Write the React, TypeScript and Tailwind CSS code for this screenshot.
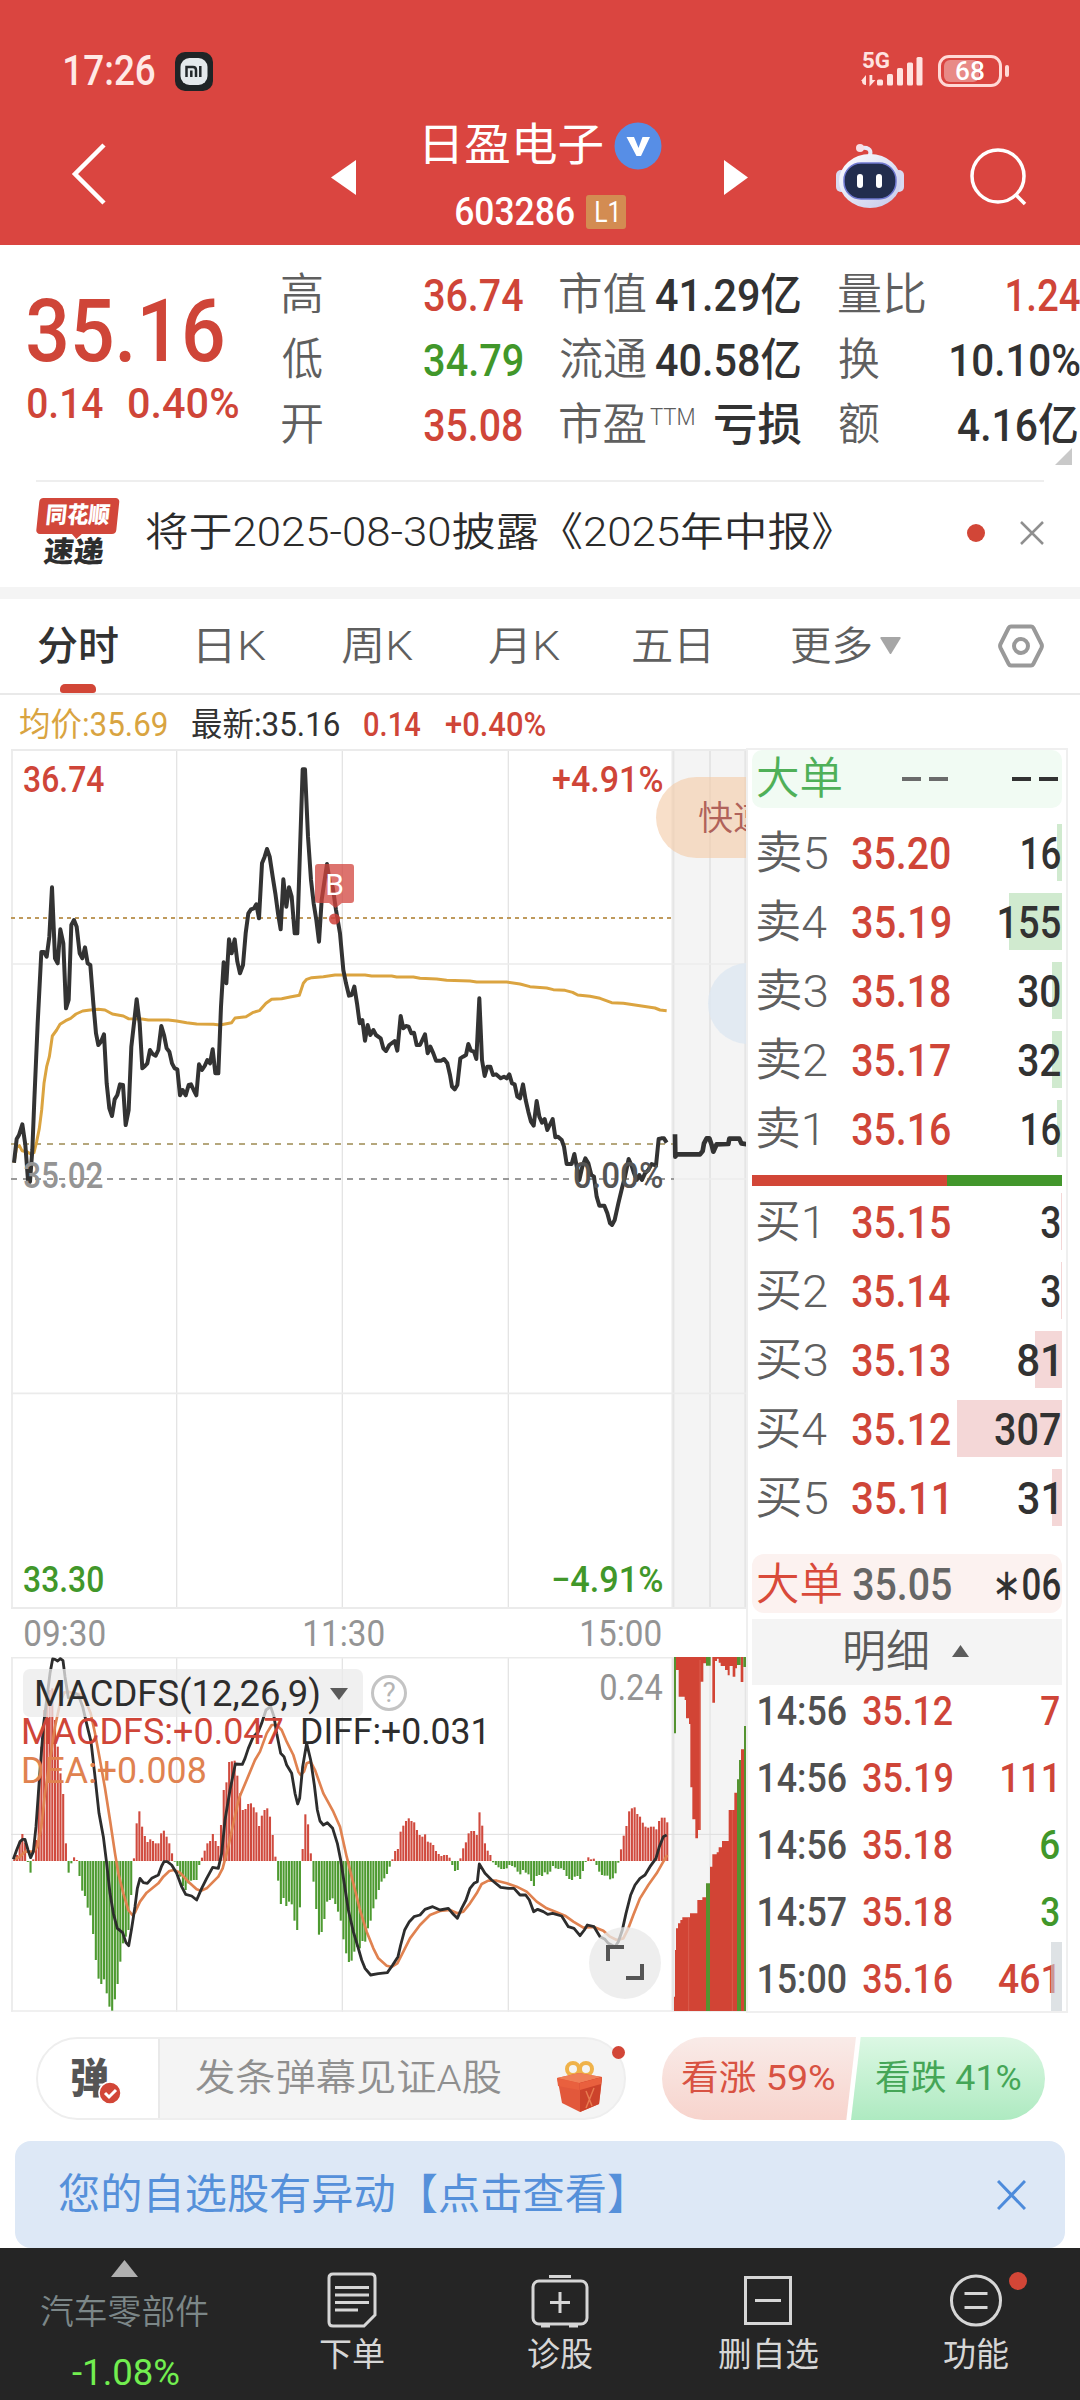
import React, { useLayoutEffect, useRef, useState } from "react";

const FONT = "font-['Roboto','Noto_Sans_CJK_SC',sans-serif]";

/** Single-line text whose visible ink spans exactly `w` pixels. */
function Fit({ w, children, className = "" }: { w: number; children: string; className?: string }) {
  const ref = useRef<HTMLSpanElement>(null);
  const [t, setT] = useState({ k: 1, dx: 0 });
  useLayoutEffect(() => {
    const el = ref.current;
    const ctx = document.createElement("canvas").getContext("2d");
    if (!el || !ctx) return;
    const cs = getComputedStyle(el);
    ctx.font = `${cs.fontWeight} ${cs.fontSize} ${cs.fontFamily}`;
    const m = ctx.measureText(children);
    const ink = m.actualBoundingBoxRight + m.actualBoundingBoxLeft;
    const k = ink > 0 ? w / ink : 1;
    setT({ k, dx: m.actualBoundingBoxLeft * k });
  }, [w, children]);
  return (
    <span className={`block shrink-0 whitespace-nowrap ${className}`} style={{ width: w }}>
      <span ref={ref} className="inline-block origin-left" style={{ transform: `translateX(${t.dx}px) scaleX(${t.k})` }}>
        {children}
      </span>
    </span>
  );
}

function Header() {
  return (
    <header className="h-[245px] bg-[#da4540] text-white">
      <div className="flex h-[123px] items-start pt-[46px]">
        <div className="flex h-[50px] w-full items-center pl-[65px]">
          <Fit w={90} className="text-[42px] font-medium leading-[50px] text-[#ffe9e6]">17:26</Fit>
          <svg className="ml-[20px]" width="38" height="39" viewBox="0 0 38 39">
            <rect width="38" height="39" rx="10" fill="#1f2426" />
            <rect x="5.500" y="6" width="27" height="27" rx="9" fill="#e4e9ec" />
            <path d="M11.500 25v-10h6.500q3 0 3 3v7M16.300 18.500v6.500M25.300 14v11" fill="none" stroke="#23282b" strokeWidth="2.500" />
          </svg>
          <div className="ml-auto mr-[13px] h-[36px] w-[64px]">
            <svg className="overflow-visible" width="64" height="36" viewBox="0 0 64 36" fill="#ffe3e0">
              <path d="M5 33.500V28H0l5-6zM1 28h4v4q-4 0-4-4zM8.500 22v11.500l6-6.500h-3.200V22z" />
              <rect x="16" y="26.500" width="6" height="6" rx="1.500" />
              <rect x="26" y="21" width="6" height="11.500" rx="1.500" />
              <rect x="36" y="15" width="6" height="17.500" rx="1.500" />
              <rect x="46" y="9.500" width="6" height="23" rx="1.500" />
              <rect x="55.500" y="4" width="6" height="28.500" rx="1.500" />
              <text x="1" y="15" fontSize="22" fontWeight="700" textLength="28" lengthAdjust="spacingAndGlyphs">5G</text>
            </svg>
          </div>
          <div className="relative mr-[7px] flex h-[32px] w-[64px] items-center justify-center rounded-[11px] border-[3px] border-[#ffd9d6]">
            <div className="absolute left-[3px] top-[2px] h-[22px] w-[35px] rounded-[6px] bg-[#e88a86]" />
            <Fit w={28} className="relative text-[26px] font-medium leading-[26px]">68</Fit>
          </div>
          <div className="-ml-[4px] mr-[71px] h-[12px] w-[4px] rounded-full bg-[#ffd9d6]" />
        </div>
      </div>
      <div className="flex h-[122px]">
        <svg className="ml-[70px] mt-[18px] shrink-0" width="40" height="66" viewBox="0 0 40 66">
          <path d="M34 4 5 33l29 29" fill="none" stroke="#fff" strokeWidth="4.500" />
        </svg>
        <svg className="ml-[221px] mt-[37px] shrink-0" width="25" height="36" viewBox="0 0 25 36">
          <path d="M25 0v35L0 17.500z" fill="#fff" />
        </svg>
        <div className="ml-[66px] w-[242px] shrink-0">
          <div className="flex h-[45px] items-center">
            <Fit w={177} className="ml-[3px] text-[45px] leading-[46px]">日盈电子</Fit>
            <svg className="ml-[12px] shrink-0" width="48" height="48" viewBox="0 0 48 48">
              <circle cx="24" cy="24" r="23.500" fill="#578ee6" />
              <path d="M12.500 15h7.500l4.500 11 4-11h7.500L27 34h-4.500z" fill="#fff" />
            </svg>
          </div>
          <div className="mt-[26px] flex h-[36px] items-center pl-[34px]">
            <Fit w={118} className="text-[39px] font-medium leading-[36px]">603286</Fit>
            <div className="ml-[12px] flex h-[34px] w-[40px] items-center justify-center rounded-[3px] bg-[#d38c52]">
              <Fit w={21} className="text-[29px] leading-[34px]">L1</Fit>
            </div>
          </div>
        </div>
        <svg className="ml-[60px] mt-[37px] shrink-0" width="25" height="36" viewBox="0 0 25 36">
          <path d="M0 0v35l24-17.500z" fill="#fff" />
        </svg>
        <svg className="ml-[86px] mt-[20px] shrink-0" width="72" height="68" viewBox="0 0 72 68">
          <defs>
            <linearGradient id="rim" x1="0" y1="0" x2="1" y2="1">
              <stop offset="0" stopColor="#fff" />
              <stop offset="1" stopColor="#c3c8ea" />
            </linearGradient>
          </defs>
          <path d="M35 12C37 6 32 4 26 5" fill="none" stroke="#e9e9f7" strokeWidth="4" strokeLinecap="round" />
          <circle cx="25" cy="5" r="4" fill="#f7dfe6" />
          <rect x="1" y="27" width="10" height="22" rx="5" fill="#d8daf1" />
          <rect x="59" y="27" width="10" height="22" rx="5" fill="#d8daf1" />
          <ellipse cx="35" cy="38" rx="31" ry="27" fill="url(#rim)" />
          <rect x="9" y="20" width="52" height="36" rx="17" fill="#222d4d" stroke="#6f78d0" strokeWidth="1.500" />
          <rect x="22" y="31" width="6" height="14" rx="3" fill="#fff" />
          <rect x="41" y="31" width="6" height="14" rx="3" fill="#fff" />
        </svg>
        <svg className="ml-[61px] mt-[23px] shrink-0" width="62" height="62" viewBox="0 0 62 62" fill="none" stroke="#fff" strokeWidth="3.500">
          <circle cx="30" cy="30" r="26" />
          <path d="m48 49 9 9" />
        </svg>
      </div>
    </header>
  );
}

const RED = "text-[#cf4538]";
const INK = "text-[#323232]";
const GREEN = "text-[#41972a]";

function Stats() {
  const lab = "text-[44px] leading-[65px] font-[350] text-[#5f5f5f]";
  const val = "text-[45px] leading-[65px] font-medium";
  return (
    <section className="flex h-[235px] overflow-hidden pt-[18px]">
      <div className="w-[282px] shrink-0 pl-[28px]">
        <Fit w={195} className={`mt-[18px] h-[100px] text-[88px] font-medium leading-[100px] ${RED}`}>35.16</Fit>
        <div className={`-mt-[1px] flex h-[46px] gap-[26px] text-[43px] font-medium leading-[46px] ${RED}`}>
          <Fit w={75}>0.14</Fit>
          <Fit w={109}>0.40%</Fit>
        </div>
      </div>
      <div className="w-[41px] shrink-0">
        <Fit w={40} className={lab}>高</Fit>
        <Fit w={40} className={lab}>低</Fit>
        <Fit w={40} className={lab}>开</Fit>
      </div>
      <div className="ml-[101px] w-[100px] shrink-0">
        <Fit w={99} className={`${val} ${RED}`}>36.74</Fit>
        <Fit w={98} className={`${val} ${GREEN}`}>34.79</Fit>
        <Fit w={98} className={`${val} ${RED}`}>35.08</Fit>
      </div>
      <div className="ml-[36px] w-[241px] shrink-0">
        <div className="flex gap-[10px]">
          <Fit w={86} className={lab}>市值</Fit>
          <Fit w={144} className={`${val} ${INK}`}>41.29亿</Fit>
        </div>
        <div className="flex gap-[10px]">
          <Fit w={86} className={lab}>流通</Fit>
          <Fit w={144} className={`${val} ${INK}`}>40.58亿</Fit>
        </div>
        <div className="flex">
          <Fit w={86} className={lab}>市盈</Fit>
          <Fit w={44} className="ml-[4px] text-[24px] font-light leading-[48px] text-[#5c5c5c]">TTM</Fit>
          <Fit w={86} className={`ml-[21px] ${val} ${INK}`}>亏损</Fit>
        </div>
      </div>
      <div className="ml-[38px] w-[241px] shrink-0">
        <div className="flex justify-between">
          <Fit w={86} className={lab}>量比</Fit>
          <Fit w={73} className={`${val} ${RED}`}>1.24</Fit>
        </div>
        <div className="flex justify-between">
          <Fit w={40} className={lab}>换</Fit>
          <Fit w={129} className={`${val} ${INK}`}>10.10%</Fit>
        </div>
        <div className="flex justify-between pr-[3px]">
          <Fit w={40} className={lab}>额</Fit>
          <Fit w={119} className={`${val} ${INK}`}>4.16亿</Fit>
        </div>
        <svg className="-mt-[10px] ml-[216px]" width="17" height="17" viewBox="0 0 17 17">
          <path d="M17 0v17H0z" fill="#c9c9c9" />
        </svg>
      </div>
    </section>
  );
}

function News() {
  return (
    <section className="mx-[36px] flex h-[107px] items-center border-t-2 border-[#eeeeee] pb-[3px]">
      <div className="w-[83px] shrink-0 -skew-x-6">
        <div className="relative z-10 flex h-[36px] w-[80px] items-center justify-center rounded-[4px] bg-[#d2473b] text-white">
          <Fit w={63} className="text-[23px] font-black leading-[34px]">同花顺</Fit>
          <svg className="absolute -bottom-[5px] left-[35px]" width="12" height="6" viewBox="0 0 12 6">
            <path d="M0 0h12L6 6z" fill="#d2473b" />
          </svg>
        </div>
        <Fit w={60} className="ml-[10px] mt-[3px] text-[29px] font-black leading-[31px] text-[#2e2e2e]">速递</Fit>
      </div>
      <Fit w={686} className="ml-[27px] text-[40px] font-[350] leading-[60px] text-[#2b2b2b]">将于2025-08-30披露《2025年中报》</Fit>
      <div className="ml-auto h-[18px] w-[18px] rounded-full bg-[#d24637]" />
      <svg className="ml-[35px] shrink-0" width="24" height="24" viewBox="0 0 24 24">
        <path d="m1 1 22 22M23 1 1 23" stroke="#8f8f8f" strokeWidth="2.500" />
      </svg>
    </section>
  );
}

function Tabs() {
  const c = "text-[40px] leading-[95px] font-[350] text-[#5f5f5f]";
  return (
    <nav className="flex h-[96px] border-b-2 border-[#e9e9e9] pl-[38px]">
      <div className="w-[80px]">
        <Fit w={80} className="h-[85px] text-[40px] font-medium leading-[95px] text-[#323232]">分时</Fit>
        <div className="ml-[22px] h-[9px] w-[36px] rounded-t-[5px] rounded-b-[3px] bg-[#d24637]" />
      </div>
      <div className="flex">
        <Fit w={67} className={`ml-[81px] ${c}`}>日K</Fit>
        <Fit w={71} className={`ml-[76px] ${c}`}>周K</Fit>
        <Fit w={71} className={`ml-[76px] ${c}`}>月K</Fit>
        <Fit w={76} className={`ml-[73px] ${c}`}>五日</Fit>
        <Fit w={80} className={`ml-[82px] ${c}`}>更多</Fit>
        <svg className="ml-[9px] mt-[38px]" width="21" height="18" viewBox="0 0 21 18">
          <path d="M1 0h19q1 0 .5 1.500L11 17h-1L.5 1.500Q0 0 1 0" fill="#a6a6a6" />
        </svg>
        <svg className="ml-[97px] mt-[25px]" width="46" height="44" viewBox="0 0 46 44" fill="none" stroke="#999" strokeWidth="4">
          <path d="M13 2.500h20q1.500 0 2.300 1.300L43.500 20q.8 2 0 3.800L35.300 40q-.8 1.500-2.300 1.500H13q-1.500 0-2.300-1.500L2.500 23.800q-.8-1.800 0-3.800L10.700 3.800Q11.500 2.500 13 2.500z" />
          <circle cx="23" cy="22" r="7" />
        </svg>
      </div>
    </nav>
  );
}

const PRICE =
  "42,1268 50,1197 57,1185 67,1153 76,1215 84,1320 90,1325 97,1230 103,1080 113,850 124,636 132,636 140,650 148,590 156,442 165,655 173,670 181,568 190,610 198,805 206,780 214,555 222,540 230,560 239,640 247,655 255,622 263,670 271,675 280,790 288,880 295,915 303,905 312,883 320,1030 328,1105 336,1128 344,1078 352,1065 360,1033 369,1035 377,1155 386,1110 394,920 402,850 410,778 419,850 427,985 435,978 442,970 450,930 458,942 467,947 475,930 484,858 492,885 500,925 508,935 516,970 524,985 532,988 540,1066 548,1050 557,1066 566,1035 573,1033 581,1050 589,1066 597,973 606,990 614,978 622,960 630,970 638,928 646,1000 655,1000 663,800 671,667 679,730 687,598 695,640 704,598 712,665 720,700 729,675 737,580 745,520 753,508 762,505 769,493 777,535 786,370 794,350 801,327 809,350 818,410 826,460 834,520 842,568 850,418 859,500 867,442 875,470 884,580 892,580 900,330 908,88 915,88 924,290 933,420 941,490 949,540 957,605 965,480 981,372 990,430 998,440 1008,510 1020,580 1030,690 1038,730 1047,767 1055,765 1063,740 1071,790 1079,850 1087,840 1095,902 1103,855 1111,885 1120,870 1128,885 1142,895 1150,925 1158,933 1168,915 1184,903 1192,932 1202,828 1210,865 1218,858 1226,860 1234,880 1242,878 1250,915 1260,915 1275,883 1283,940 1291,920 1300,940 1308,962 1324,962 1332,957 1342,970 1350,1005 1356,1040 1364,1048 1372,1035 1381,955 1389,950 1398,945 1405,912 1413,932 1422,935 1429,957 1438,775 1446,960 1454,1008 1462,980 1471,980 1479,1005 1488,1003 1502,1015 1512,1010 1520,1015 1528,1003 1536,1030 1544,1033 1552,1070 1560,1075 1569,1033 1577,1080 1585,1115 1593,1145 1601,1157 1610,1083 1618,1130 1626,1148 1634,1137 1642,1170 1658,1137 1666,1192 1674,1190 1685,1200 1692,1220 1700,1272 1715,1272 1723,1242 1738,1320 1747,1280 1756,1255 1765,1270 1774,1305 1782,1310 1790,1370 1798,1397 1813,1397 1822,1420 1830,1450 1836,1455 1844,1440 1855,1390 1867,1340 1875,1310 1886,1257 1894,1275 1902,1300 1910,1320 1918,1305 1926,1320 1935,1300 1945,1290 1955,1272 1968,1277 1976,1197 1984,1195 1992,1195 2000,1208";
const AVERAGE =
  "42,1268 50,1222 58,1217 66,1232 80,1235 92,1242 102,1238 110,1205 118,1165 125,1110 132,1030 140,980 148,950 157,888 170,870 180,853 197,842 212,835 228,822 248,813 270,810 295,808 315,810 337,822 370,828 385,836 425,837 445,840 505,840 530,843 560,848 590,852 640,853 660,855 695,848 705,834 738,830 760,817 778,812 798,790 815,778 845,776 870,771 898,766 910,730 920,718 935,713 970,710 1005,705 1095,705 1115,708 1175,708 1190,711 1240,711 1260,715 1310,717 1340,721 1410,723 1430,726 1520,726 1560,732 1590,740 1640,744 1660,749 1695,751 1718,757 1733,765 1770,769 1800,775 1835,788 1870,790 1920,797 1965,804 1980,810 2000,812";
const AUCTION = "2025,1183 2026,1250 2030,1243 2100,1243 2108,1233 2112,1210 2120,1195 2128,1195 2135,1215 2140,1235 2150,1213 2185,1212 2188,1196 2218,1196 2224,1210 2241,1213";

function Label({ className, w, children }: { className: string; w: number; children: string }) {
  return (
    <div className={`absolute ${className}`}>
      <Fit w={w}>{children}</Fit>
    </div>
  );
}

function PriceChart() {
  return (
    <div className="relative h-[862px] w-[746px] overflow-hidden text-[36px] font-medium leading-[40px]">
      <svg className="-mt-[8px] block" width="747" height="870" viewBox="0 0 2241 2610" fill="none">
        <path d="M36 28V2604M530 28V2604M1027 28V2604M1525 28V2604" stroke="#e4e4e4" strokeWidth="4" />
        <rect x="2013" y="28" width="228" height="2576" fill="#f4f4f4" />
        <path d="M2020 28V2604M2130 28V2604M2236 28V2604" stroke="#e5e5e5" strokeWidth="6" />
        <path d="M33 30H2241M33 2604H2241" stroke="#ebebeb" strokeWidth="6" />
        <path d="M33 672H2241M33 1960H2241M2020 1317H2241" stroke="#ebebeb" strokeWidth="5" />
        <path d="M33 534H2016" stroke="#bf9a5c" strokeWidth="6" strokeDasharray="12 12" />
        <path d="M33 1212H2022" stroke="#b5a77c" strokeWidth="6" strokeDasharray="18 18" />
        <path d="M33 1317H2022" stroke="#999" strokeWidth="6" strokeDasharray="18 18" />
        <polyline points={AVERAGE} stroke="#dba440" strokeWidth="9" strokeLinejoin="round" />
        <polyline points={PRICE} stroke="#333" strokeWidth="12" strokeLinejoin="round" />
        <polyline points={AUCTION} stroke="#333" strokeWidth="14" strokeLinejoin="round" />
      </svg>
      <svg className="absolute left-[315px] top-[116px]" width="40" height="62" viewBox="0 0 40 62">
        <path d="M3 0h33q3 0 3 3v33q0 3-3 3h-9l-6.500 5-6.500-5H3q-3 0-3-3V3q0-3 3-3z" fill="#d2443e" fillOpacity=".75" />
        <circle cx="19.500" cy="55" r="5.500" fill="#cf403a" fillOpacity=".85" />
        <text x="19.500" y="31" fontSize="30" fontWeight="400" textAnchor="middle" fill="#fff">B</text>
      </svg>
      <Label className={`left-[24px] top-[12px] ${RED}`} w={80}>36.74</Label>
      <Label className={`left-[553px] top-[12px] ${RED}`} w={109}>+4.91%</Label>
      <Label className="left-[24px] top-[408px] text-[#949494]" w={79}>35.02</Label>
      <Label className="left-[574px] top-[408px] text-[#555]" w={88}>0.00%</Label>
      <Label className={`left-[24px] top-[812px] ${GREEN}`} w={79}>33.30</Label>
      <Label className={`left-[553px] top-[812px] ${GREEN}`} w={109}>−4.91%</Label>
      <div className="absolute left-[656px] top-[29px] h-[81px] w-[130px] rounded-l-full bg-[#f4c9a5]/60 pl-[43px] pt-[21px] text-[#b0625a]">
        <Fit w={68} className="text-[34px] font-[350]">快速</Fit>
      </div>
      <div className="absolute left-[708px] top-[215px] h-[81px] w-[81px] rounded-full bg-[#dce7f1]/75" />
    </div>
  );
}

/* Histogram end positions, one per minute, measured against the 903 zero line. */
const MACD = [
  898, 885, 845, 822, 848, 906, 938, 898, 840, 690, 560, 450, 400, 390, 385, 480, 560, 640, 702, 850, 938, 910, 892, 900, 948, 992, 1008, 1043, 1066,
  1122, 1200, 1256, 1272, 1258, 1300, 1340, 1352, 1318, 1272, 1205, 1150, 1130, 1110, 1005, 895, 790, 754, 800, 828, 846, 838, 843, 850, 850, 820, 812,
  830, 850, 880, 905, 918, 950, 978, 990, 970, 962, 960, 960, 915, 893, 872, 850, 843, 822, 843, 858, 795, 690, 667, 606, 604, 602, 647, 700, 750, 747,
  732, 730, 742, 757, 798, 767, 750, 745, 770, 825, 890, 962, 1032, 1014, 1038, 1025, 1033, 1082, 1110, 1042, 867, 763, 793, 880, 965, 1047, 1124, 1116,
  1077, 1025, 1020, 1015, 1032, 1055, 1082, 1138, 1180, 1206, 1202, 1175, 1160, 1165, 1143, 1145, 1105, 1082, 1045, 1018, 990, 965, 955, 942, 920, 898,
  873, 867, 815, 797, 783, 775, 783, 787, 810, 825, 830, 823, 845, 848, 855, 873, 882, 888, 885, 885, 893, 915, 933, 930, 895, 865, 847, 820, 813, 813,
  825, 757, 797, 850, 872, 885, 907, 915, 922, 927, 927, 925, 915, 918, 922, 935, 943, 930, 938, 943, 963, 978, 948, 945, 948, 937, 943, 935, 918, 925,
  927, 925, 930, 948, 957, 960, 950, 948, 957, 933, 906, 892, 898, 896, 915, 935, 945, 947, 947, 958, 955, 940, 908, 868, 827, 798, 754, 745, 742, 762,
  770, 788, 800, 803, 800, 800, 808, 783, 773, 773, 787,
];
const DIFF =
  "40,898 50,870 60,845 68,838 75,838 84,870 92,893 100,875 108,800 118,660 130,500 140,420 150,340 158,297 165,298 173,303 181,296 189,302 195,350 205,413 215,415 225,400 235,405 248,440 262,500 273,545 285,650 297,760 310,830 320,910 330,1000 340,1060 352,1105 368,1118 378,1148 386,1157 395,1105 405,1040 412,985 420,955 430,968 442,970 455,955 475,945 485,918 492,905 502,905 515,915 530,940 545,980 557,1003 575,1008 590,1020 605,985 620,955 638,922 655,925 665,880 675,780 690,690 706,612 727,613 735,595 745,565 760,530 775,515 785,490 798,450 812,440 822,470 830,520 842,580 852,590 860,615 875,640 885,700 893,732 899,715 908,620 920,550 932,600 943,675 952,750 960,783 970,795 982,788 998,805 1012,850 1022,900 1032,965 1045,1050 1060,1115 1075,1165 1085,1200 1095,1225 1112,1245 1135,1241 1162,1238 1178,1215 1194,1190 1202,1155 1214,1110 1228,1085 1242,1070 1260,1065 1275,1048 1298,1040 1320,1050 1345,1045 1360,1063 1372,1075 1385,1045 1398,1020 1410,985 1422,970 1432,965 1438,912 1455,940 1475,960 1502,982 1525,985 1542,985 1560,1005 1577,1005 1588,1020 1601,1055 1613,1048 1630,1055 1643,1063 1658,1060 1685,1068 1705,1100 1722,1105 1740,1127 1753,1110 1762,1095 1782,1100 1800,1130 1815,1138 1825,1150 1845,1160 1855,1145 1867,1110 1878,1060 1892,1005 1905,975 1920,955 1935,945 1950,920 1968,895 1978,860 1990,830 2000,825";
const DEA =
  "45,898 60,890 75,875 100,875 112,860 124,800 135,700 150,600 165,500 180,430 192,398 205,395 220,400 240,402 258,425 272,460 285,520 300,600 315,685 330,780 345,880 355,940 370,1000 385,1050 397,1065 405,1057 420,1025 440,998 475,970 490,950 508,933 522,930 540,938 565,965 590,988 603,992 620,985 640,965 655,950 668,925 685,860 700,790 717,715 740,660 765,600 780,575 800,520 815,495 830,495 845,510 860,545 880,585 895,635 902,645 912,635 920,610 932,605 945,630 970,700 1000,755 1020,800 1040,890 1060,970 1080,1050 1100,1115 1120,1165 1135,1195 1160,1217 1175,1221 1192,1210 1210,1175 1230,1135 1260,1095 1290,1065 1320,1053 1350,1050 1372,1060 1390,1055 1410,1030 1430,1000 1445,972 1465,962 1490,962 1520,970 1550,980 1580,995 1610,1025 1640,1045 1670,1057 1695,1067 1720,1085 1750,1103 1782,1101 1810,1112 1830,1130 1850,1140 1870,1135 1885,1105 1900,1065 1920,1015 1945,975 1970,940 1990,905 2002,885";

function MacdChart() {
  return (
    <div className="relative h-[356px] w-[746px] overflow-hidden text-[37px] font-normal leading-[38px]">
      <svg className="block" width="747" height="356" viewBox="0 291 2241 1068" fill="none">
        <rect x="2013" y="291" width="228" height="1064" fill="#f4f4f4" />
        <path d="M36 291V1355M530 291V1355M1027 291V1355M1525 291V1355M2130 291V1355M2236 291V1355" stroke="#e4e4e4" strokeWidth="4" />
        <path d="M2020 291V1355" stroke="#e5e5e5" strokeWidth="7" />
        <path d="M33 293H2241M33 1353H2241" stroke="#ebebeb" strokeWidth="5" />
        <path d="M33 823H2241" stroke="#dedede" strokeWidth="3" />
        {MACD.map((y, i) => (
          <rect key={i} x={39.5 + i * 8.163} y={Math.min(y, 903)} width="6.300" height={Math.abs(y - 903)} fill={y < 903 ? "#d04a3e" : "#4d9a30"} />
        ))}
        <polyline points={DEA} stroke="#e08250" strokeWidth="8" strokeLinejoin="round" />
        <polyline points={DIFF} stroke="#2d2d2d" strokeWidth="8.500" strokeLinejoin="round" />
        <g transform="translate(1110 0)">
          <path
            d="M918 291V330H926V410H944V420H948V475H957V492H961V682H967V778H976V835H984V810H992V365H1000V310H1008V291ZM1027 291V428H1035V303H1041V296H1046V308H1052V318H1065V330H1073V346H1079V318H1088V350H1096V325H1101V291ZM1112 291V366H1120V291Z"
            fill="#d24435"
          />
          <path d="M912 291V520H918V291ZM1008 291V317H1022V291ZM1101 291V315H1112V291ZM1120 291V321H1130V291Z" fill="#549330" />
          <path
            d="M912 1353V1310H915V1170H918V1105H924V1090H931V1080H937V1072H960V1060H982V1020H997V1012H1008V1353ZM1020 1353V920H1027V883H1040V877H1046V862H1056V843H1076V750H1093V698H1101V1353ZM1113 1353V568H1122V1353Z"
            fill="#d24435"
          />
          <path d="M1008 1353V970H1020V1353ZM1101 1353V658H1107V600H1113V1353ZM1122 1353V498H1130V1353Z" fill="#549330" />
          <path d="M956 1072V1353M1087 750V1353M990 300V810" stroke="#e06a5c" strokeWidth="2" />
        </g>
      </svg>
      <div className="absolute left-[23px] top-[12px] flex h-[48px] w-[340px] items-center rounded-[7px] bg-[#ebebeb]/75 pl-[14px] pt-[2px] text-[#2d2d2d]">
        <Fit w={282} className="leading-[36px]">MACDFS(12,26,9)</Fit>
        <svg className="ml-[11px]" width="18" height="12" viewBox="0 0 18 12">
          <path d="M0 0h18L9 12z" fill="#5b5b5b" />
        </svg>
      </div>
      <div className="absolute left-[371px] top-[18px] flex h-[36px] w-[36px] items-center justify-center rounded-full border-[3px] border-[#c4c4c4] text-[28px] leading-[30px] text-[#b5b5b5]">
        ?
      </div>
      <Label className={`left-[24px] top-[56px] ${RED}`} w={259}>MACDFS:+0.047</Label>
      <Label className="left-[303px] top-[56px] text-[#2d2d2d]" w={181}>DIFF:+0.031</Label>
      <Label className="left-[24px] top-[95px] text-[#e08250]" w={181}>DEA:+0.008</Label>
      <Label className="left-[601px] top-[12px] text-[#949494]" w={61}>0.24</Label>
      <div className="absolute left-[589px] top-[270px] flex h-[72px] w-[72px] items-center justify-center rounded-full bg-[#e8e8e8]/75">
        <svg width="38" height="38" viewBox="0 0 38 38" fill="none" stroke="#555" strokeWidth="4">
          <path d="M2 17V3h16M36 20v14H20" />
        </svg>
      </div>
    </div>
  );
}

type Row = { l: string; p: string; q: string; qw: number; bar: number };
const SELL: Row[] = [
  { l: "卖5", p: "35.20", q: "16", qw: 38, bar: 5 },
  { l: "卖4", p: "35.19", q: "155", qw: 61, bar: 53 },
  { l: "卖3", p: "35.18", q: "30", qw: 42, bar: 10 },
  { l: "卖2", p: "35.17", q: "32", qw: 42, bar: 10 },
  { l: "卖1", p: "35.16", q: "16", qw: 38, bar: 5 },
];
const BUY: Row[] = [
  { l: "买1", p: "35.15", q: "3", qw: 19, bar: 1 },
  { l: "买2", p: "35.14", q: "3", qw: 19, bar: 1 },
  { l: "买3", p: "35.13", q: "81", qw: 38, bar: 27 },
  { l: "买4", p: "35.12", q: "307", qw: 65, bar: 105 },
  { l: "买5", p: "35.11", q: "31", qw: 38, bar: 10 },
];

function BookRow({ r, side }: { r: Row; side: "sell" | "buy" }) {
  const one = r.l.endsWith("1");
  return (
    <div className="relative my-[6px] flex h-[57px] items-center pl-[5px] pt-[3px] text-[45px] leading-[54px]">
      <div className={`absolute right-0 top-0 h-[57px] ${side === "sell" ? "bg-[#d0eacf]" : "bg-[#f4d7d7]"}`} style={{ width: r.bar }} />
      <div className="w-[95px] shrink-0">
        <Fit w={one ? 60 : 70} className="font-[350] text-[#5f5f5f]">{r.l}</Fit>
      </div>
      <Fit w={r.p === "35.11" ? 94 : 98} className={`font-medium ${RED}`}>{r.p}</Fit>
      <Fit w={r.qw} className={`relative ml-auto font-medium ${INK} ${r.q === "81" || r.q === "31" ? "mr-[6px]" : "mr-[2px]"}`}>{r.q}</Fit>
    </div>
  );
}

const TRADES = [
  { t: "14:56", p: "35.12", q: "7", w: 18, up: true },
  { t: "14:56", p: "35.19", q: "111", w: 53, up: true },
  { t: "14:56", p: "35.18", q: "6", w: 18, up: false },
  { t: "14:57", p: "35.18", q: "3", w: 18, up: false },
  { t: "15:00", p: "35.16", q: "461", w: 56, up: true },
];

function OrderBook() {
  return (
    <aside className="relative h-[1265px] w-[322px] shrink-0 border-2 border-[#efefef] px-[4px]">
      <div className="flex h-[58px] w-[310px] items-center rounded-[10px] bg-[#f1fbf3] pl-[5px]">
        <Fit w={84} className="text-[44px] font-[350] leading-[56px] text-[#4fb058]">大单</Fit>
        <div className="ml-[61px] flex gap-[8px]">
          <span className="h-[4px] w-[19px] bg-[#6b6b6b]" />
          <span className="h-[4px] w-[19px] bg-[#6b6b6b]" />
        </div>
        <div className="ml-auto mr-[4px] flex gap-[8px]">
          <span className="h-[4px] w-[19px] bg-[#323232]" />
          <span className="h-[4px] w-[19px] bg-[#323232]" />
        </div>
      </div>
      <div className="flex w-[310px] flex-col pt-[10px]">
        {SELL.map((r) => (
          <BookRow key={r.l} r={r} side="sell" />
        ))}
      </div>
      <div className="mt-[12px] flex h-[11px] w-[310px] bg-[#42962b]">
        <div className="w-[195px] bg-[#d24637]" />
      </div>
      <div className="flex w-[310px] flex-col pt-[1px]">
        {BUY.map((r) => (
          <BookRow key={r.l} r={r} side="buy" />
        ))}
      </div>
      <div className="mt-[22px] flex h-[59px] w-[310px] items-center rounded-[12px] bg-[#fcf2f0] pl-[5px] pt-[2px] text-[45px] leading-[57px]">
        <Fit w={84} className="text-[44px] font-[350] leading-[56px] text-[#d94a3a]">大单</Fit>
        <Fit w={98} className="ml-[12px] font-medium text-[#666]">35.05</Fit>
        <Fit w={64} className={`ml-auto mr-[2px] font-medium ${INK}`}>∗06</Fit>
      </div>
      <div className="mt-[6px] flex h-[66px] w-[310px] items-center bg-[#f4f4f4] pl-[93px]">
        <Fit w={82} className="text-[44px] font-[350] leading-[69px] text-[#5a5a5a]">明细</Fit>
        <svg className="-mt-[2px] ml-[25px]" width="17" height="12" viewBox="0 0 17 12">
          <path d="M8.500 0 17 12H0z" fill="#5c5c5c" />
        </svg>
      </div>
      <div className="-mt-[7px] w-[310px] text-[41px] font-medium">
        {TRADES.map((r, i) => (
          <div key={i} className="flex h-[67px] items-center pl-[7px] leading-[67px]">
            <Fit w={87} className="text-[#505050]">{r.t}</Fit>
            <Fit w={89} className={`ml-[17px] ${RED}`}>{r.p}</Fit>
            <Fit w={r.w} className={`ml-auto ${i === 1 || i === 4 ? "mr-[7px]" : "mr-[3px]"} ${r.up ? RED : GREEN}`}>{r.q}</Fit>
          </div>
        ))}
      </div>
      <div className="absolute bottom-0 right-[4px] h-[69px] w-[11px] bg-[#c8ced4]/60" />
    </aside>
  );
}

function Quote() {
  return (
    <section className="h-[1317px]">
      <div className="flex h-[53px] items-center pl-[20px] pt-[6px] text-[33px] font-medium leading-[47px]">
        <Fit w={147} className="font-normal text-[#d9a441]">均价:35.69</Fit>
        <Fit w={147} className={`ml-[25px] font-normal ${INK}`}>最新:35.16</Fit>
        <Fit w={56} className={`ml-[25px] ${RED}`}>0.14</Fit>
        <Fit w={99} className={`ml-[26px] ${RED}`}>+0.40%</Fit>
      </div>
      <div className="flex">
        <div className="w-[746px] shrink-0">
          <PriceChart />
          <div className="flex h-[47px] items-center pl-[25px] pt-[2px] text-[36px] font-normal leading-[45px] text-[#949494]">
            <Fit w={80}>09:30</Fit>
            <Fit w={79} className="ml-[200px]">11:30</Fit>
            <Fit w={79} className="ml-[198px]">15:00</Fit>
          </div>
          <MacdChart />
        </div>
        <OrderBook />
      </div>
    </section>
  );
}

function Actions() {
  return (
    <section className="flex h-[129px] pl-[36px] pt-[25px]">
      <div className="relative flex h-[83px] w-[590px] rounded-full border-2 border-[#eeeeee] bg-[#f4f4f4]">
        <div className="flex w-[122px] items-center rounded-l-full border-r-2 border-[#e9e9e9] bg-white pl-[34px]">
          <div className="relative">
            <Fit w={36} className="text-[41px] font-black leading-[58px] text-[#555]">弹</Fit>
            <svg className="absolute left-[26px] top-[31px]" width="24" height="24" viewBox="0 0 24 24">
              <circle cx="12" cy="12" r="11" fill="#d24637" stroke="#fff" strokeWidth="1.500" />
              <path d="m7 12 4 4 7-7" fill="none" stroke="#fff" strokeWidth="3" />
            </svg>
          </div>
        </div>
        <Fit w={305} className="ml-[36px] text-[37px] font-[350] leading-[80px] text-[#8f8f8f]">发条弹幕见证A股</Fit>
        <svg className="ml-[55px] mt-[22px] shrink-0" width="48" height="52" viewBox="0 0 48 52">
          <g fill="none" stroke="#efb24a" strokeWidth="4">
            <ellipse cx="17" cy="8" rx="6" ry="6" />
            <ellipse cx="30" cy="8" rx="6" ry="6" />
          </g>
          <path d="M1 17 23 12l23 4-1 11-2 16-19 8-18-9-3-16z" fill="#e2583b" />
          <path d="m1 17 22 5 23-6-23-4z" fill="#ef7f58" />
          <path d="m24 22 22-6-3 27-19 8z" fill="#cc432b" />
          <path d="m1 17 22 5v7L2 25zM46 16l-22 6v7l21-6z" fill="#e9603e" />
          <path d="m30 30 6 15M38 27l-8 20" stroke="#e77a4f" strokeWidth="1.500" />
        </svg>
        <div className="absolute -right-[1px] top-[7px] h-[13px] w-[13px] rounded-full bg-[#d24637]" />
      </div>
      <div className="ml-[36px] flex h-[83px] w-[383px] overflow-hidden rounded-full">
        <div className="flex w-[194px] shrink-0 items-center bg-gradient-to-b from-[#f9ebe8] to-[#f7d4cd] pl-[20px] [clip-path:polygon(0_0,100%_0,95%_100%,0_100%)]">
          <Fit w={153} className="text-[35px] leading-[82px] text-[#d85242]">看涨 59%</Fit>
        </div>
        <div className="-ml-[5px] flex w-[194px] shrink-0 items-center bg-gradient-to-b from-[#dcf8e4] to-[#aeeac1] pl-[25px] [clip-path:polygon(5%_0,100%_0,100%_100%,0_100%)]">
          <Fit w={145} className="text-[35px] leading-[82px] text-[#45a657]">看跌 41%</Fit>
        </div>
      </div>
    </section>
  );
}

function Banner() {
  return (
    <section className="mx-[15px] flex h-[107px] items-center rounded-[16px] bg-[#dde8f6] pl-[44px] pr-[39px]">
      <Fit w={563} className="text-[42px] leading-[100px] text-[#5590da]">您的自选股有异动【点击查看】</Fit>
      <svg className="ml-auto" width="29" height="30" viewBox="0 0 29 30">
        <path d="m1 1 27 28M28 1 1 29" stroke="#4d8bdb" strokeWidth="3" />
      </svg>
    </section>
  );
}

function BottomNav() {
  const lab = "mt-[4px] text-[33px] leading-[46px] text-[#d6d6d6]";
  return (
    <footer className="flex h-[152px] bg-[#252525]">
      <div className="w-[248px] shrink-0">
        <svg className="ml-[111px] mt-[12px]" width="27" height="17" viewBox="0 0 27 17">
          <path d="M13.500 0 27 17H0z" fill="#b0b0b0" />
        </svg>
        <Fit w={167} className="ml-[41px] mt-[12px] text-[34px] font-[350] leading-[46px] text-[#7c8788]">汽车零部件</Fit>
        <Fit w={107} className="ml-[72px] mt-[15px] text-[37px] leading-[46px] text-[#72ee50]">-1.08%</Fit>
      </div>
      <div className="flex w-[208px] flex-col items-center pt-[24px]">
        <svg width="50" height="56" viewBox="0 0 50 56" fill="none" stroke="#d6d6d6" strokeWidth="3">
          <path d="M6 2h38q4 0 4 4v37L37 54H6q-4 0-4-4V6q0-4 4-4z" />
          <path d="M8 15.500h34M8 23h34M8 30.500h34M8 38h23" />
        </svg>
        <Fit w={64} className={lab}>下单</Fit>
      </div>
      <div className="flex w-[208px] flex-col items-center pt-[24px]">
        <svg width="58" height="56" viewBox="0 0 58 56" fill="none" stroke="#d6d6d6" strokeWidth="3">
          <rect x="2" y="9" width="54" height="43" rx="6" />
          <path d="M18 4.500h22M29 20v21M19 30.500h20M10 54h9M38 54h9" />
        </svg>
        <Fit w={64} className={lab}>诊股</Fit>
      </div>
      <div className="flex w-[208px] flex-col items-center pt-[24px]">
        <svg width="50" height="56" viewBox="0 0 50 56" fill="none" stroke="#d6d6d6" strokeWidth="3">
          <path d="M2.500 5.500h45v46h-45zM12 28.500h26" />
        </svg>
        <Fit w={99} className={lab}>删自选</Fit>
      </div>
      <div className="relative flex w-[208px] flex-col items-center pt-[24px]">
        <svg width="54" height="56" viewBox="0 0 54 56" fill="none" stroke="#d6d6d6" strokeWidth="3">
          <circle cx="27" cy="28.500" r="24.500" />
          <path d="M15.500 21.500h23M15.500 35.500h23" />
        </svg>
        <Fit w={64} className={lab}>功能</Fit>
        <div className="absolute left-[137px] top-[24px] h-[18px] w-[18px] rounded-full bg-[#d24637]" />
      </div>
    </footer>
  );
}

export default function App() {
  return (
    <main className={`h-[2400px] w-[1080px] overflow-hidden bg-white ${FONT}`}>
      <Header />
      <Stats />
      <News />
      <div className="h-[12px] bg-[#f4f4f4]" />
      <Tabs />
      <Quote />
      <Actions />
      <Banner />
      <BottomNav />
    </main>
  );
}
